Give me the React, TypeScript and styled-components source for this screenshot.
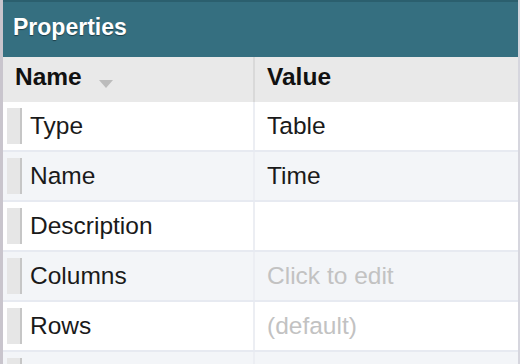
import React from "react";
import styled, { createGlobalStyle } from "styled-components";

const GlobalStyle = createGlobalStyle`
  html, body {
    margin: 0;
    padding: 0;
    background: #ffffff;
  }
  body {
    font-family: "Liberation Sans", Arial, Helvetica, sans-serif;
  }
`;

interface Property {
  name: string;
  value: string;
  placeholder?: boolean;
}

const properties: Array<Property> = [
  { name: "Type", value: "Table" },
  { name: "Name", value: "Time" },
  { name: "Description", value: "" },
  { name: "Columns", value: "Click to edit", placeholder: true },
  { name: "Rows", value: "(default)", placeholder: true },
  { name: "", value: "" },
];

function SortArrow() {
  return (
    <svg width="16" height="10" viewBox="0 0 16 10">
      <path d="M1 1 L15 1 L8 9 Z" fill="#bcbcbc" />
    </svg>
  );
}

function App() {
  return (
    <>
      <GlobalStyle />
      <Panel>
        <TitleBar>Properties</TitleBar>
        <HeaderRow>
          <HeaderCell $divider>
            Name
            <ArrowWrap>
              <SortArrow />
            </ArrowWrap>
          </HeaderCell>
          <HeaderCell>Value</HeaderCell>
        </HeaderRow>
        {properties.map((p, i) => (
          <Row key={i} $alt={i % 2 === 1}>
            <NameCell>
              <Grip />
              {p.name}
            </NameCell>
            <ValueCell $placeholder={p.placeholder}>{p.value}</ValueCell>
          </Row>
        ))}
      </Panel>
    </>
  );
}

const Panel = styled.div`
  width: 515px;
  height: 364px;
  overflow: hidden;
  border-left: 3px solid #c9c5cd;
  border-right: 2px solid #d6d6de;
  box-sizing: content-box;
`;

const TitleBar = styled.div`
  height: 51px;
  border-top: 2px solid #2b5f6e;
  background: #356f80;
  color: #ffffff;
  font-weight: bold;
  font-size: 23px;
  display: flex;
  align-items: center;
  text-shadow: 0 1px 1px rgba(0, 0, 0, 0.45);
  margin-left: -3px;
  padding: 0 0 4px 13px;
`;

const HeaderRow = styled.div`
  display: grid;
  grid-template-columns: 252px 1fr;
  height: 45px;
  background: #e9e9e9;
`;

const HeaderCell = styled.div<{ $divider?: boolean }>`
  display: flex;
  align-items: center;
  padding: 0 0 6px 12px;
  font-size: 24.5px;
  font-weight: bold;
  color: #111111;
  border-right: ${(p) => (p.$divider ? "2px solid #d9d9d9" : "none")};
`;

const ArrowWrap = styled.span`
  display: flex;
  margin: 14px 0 0 16px;
`;

const Row = styled.div<{ $alt: boolean }>`
  display: grid;
  grid-template-columns: 252px 1fr;
  height: 48px;
  border-bottom: 2px solid #e7eaf1;
  background: ${(p) => (p.$alt ? "#f3f5f8" : "#ffffff")};
`;

const NameCell = styled.div`
  display: flex;
  align-items: center;
  gap: 8px;
  padding-left: 4px;
  font-size: 24.5px;
  color: #1a1a1a;
  border-right: 2px solid #eceef3;
`;

const Grip = styled.span`
  width: 13px;
  height: 36px;
  background: #e6e6e6;
  border-right: 2px solid #c6c6c6;
  flex-shrink: 0;
`;

const ValueCell = styled.div<{ $placeholder?: boolean }>`
  display: flex;
  align-items: center;
  padding-left: 12px;
  font-size: 24.5px;
  color: ${(p) => (p.$placeholder ? "#c2c2c2" : "#1a1a1a")};
`;

export default App;
